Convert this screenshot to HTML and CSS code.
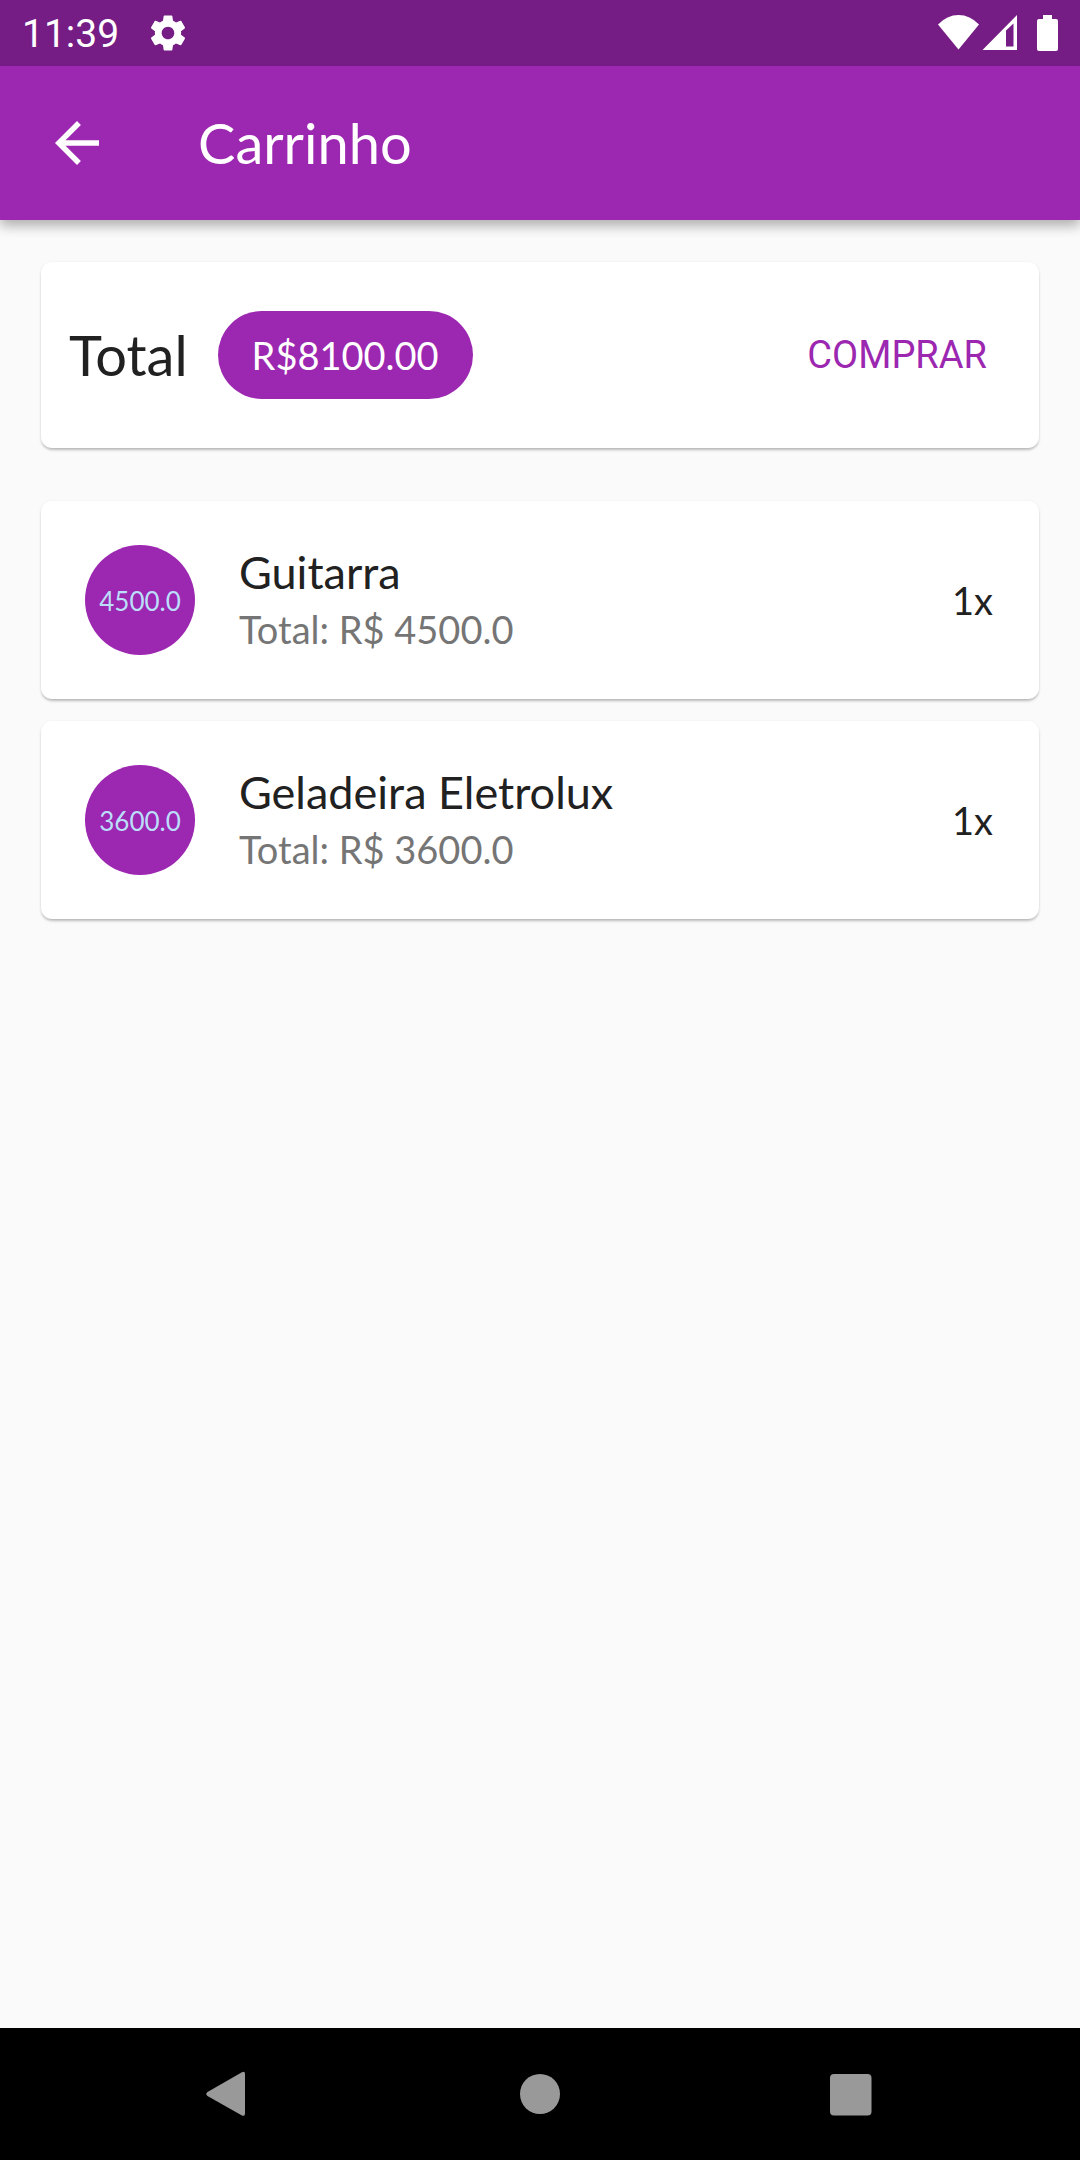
FILE: index.html
```html
<!DOCTYPE html>
<html lang="pt-BR">
<head>
<meta charset="utf-8">
<meta name="viewport" content="width=device-width, initial-scale=1">
<title>Carrinho</title>
<link rel="stylesheet" href="styles.css">
</head>
<body>
<div class="status-bar">
  <span class="clock">11:39</span>
  <svg class="gear" viewBox="0 0 24 24" width="42" height="42" aria-hidden="true"><path d="M19.43 12.98c.04-.32.07-.64.07-.98s-.03-.66-.07-.98l2.11-1.65c.19-.15.24-.42.12-.64l-2-3.46c-.12-.22-.39-.3-.61-.22l-2.49 1c-.52-.4-1.08-.73-1.69-.98l-.38-2.65C14.46 2.18 14.25 2 14 2h-4c-.25 0-.46.18-.49.42l-.38 2.65c-.61.25-1.17.59-1.69.98l-2.49-1c-.23-.09-.49 0-.61.22l-2 3.46c-.13.22-.07.49.12.64l2.11 1.65c-.04.32-.07.65-.07.98s.03.66.07.98l-2.11 1.65c-.19.15-.24.42-.12.64l2 3.46c.12.22.39.3.61.22l2.49-1c.52.4 1.08.73 1.69.98l.38 2.65c.03.24.24.42.49.42h4c.25 0 .46-.18.49-.42l.38-2.65c.61-.25 1.17-.59 1.69-.98l2.49 1c.23.09.49 0 .61-.22l2-3.46c.12-.22.07-.49-.12-.64l-2.11-1.65zM12 15.6c-1.98 0-3.6-1.62-3.6-3.6s1.62-3.6 3.6-3.6 3.6 1.62 3.6 3.6-1.62 3.6-3.6 3.6z"/></svg>
  <svg class="signals" viewBox="0 0 122 36" width="122" height="36" aria-hidden="true">
    <path d="M0 9.500Q9 0 20.500 0T41 9.500L20.500 34.500z"/>
    <path fill-rule="evenodd" d="M44.500 35L79 0V35zM68 15.500V31.500H75.500V8.500z"/>
    <path d="M105 0h9v4h4a2 2 0 0 1 2 2v28a2 2 0 0 1-2 2h-17a2 2 0 0 1-2-2V6a2 2 0 0 1 2-2h4z"/>
  </svg>
</div>
<header class="app-bar">
  <button class="back" type="button" aria-label="Voltar">
    <svg viewBox="0 0 24 24" width="66" height="66" aria-hidden="true"><path d="M20 11H7.830l5.590-5.590L12 4l-8 8 8 8 1.410-1.410L7.830 13H20v-2z"/></svg>
  </button>
  <h1 class="title">Carrinho</h1>
</header>
<main class="content">
  <section class="card summary">
    <h2 class="summary-label">Total</h2>
    <span class="chip">R$8100.00</span>
    <button class="buy" type="button">COMPRAR</button>
  </section>
  <ul class="items">
    <li class="card item">
      <span class="price">4500.0</span>
      <div class="info">
        <h3 class="name">Guitarra</h3>
        <p class="subtotal">Total: R$ 4500.0</p>
      </div>
      <span class="quantity">1x</span>
    </li>
    <li class="card item">
      <span class="price">3600.0</span>
      <div class="info">
        <h3 class="name">Geladeira Eletrolux</h3>
        <p class="subtotal">Total: R$ 3600.0</p>
      </div>
      <span class="quantity">1x</span>
    </li>
  </ul>
</main>
<nav class="nav-bar" aria-label="Sistema">
  <button class="nav-button" type="button" aria-label="Voltar">
    <svg viewBox="0 0 48 48" width="48" height="48" aria-hidden="true"><path d="M35.500 2.400Q39 .600 39 4V43.500Q39 47 35.500 45.200L1.500 26Q-1 24 1.500 22z"/></svg>
  </button>
  <button class="nav-button" type="button" aria-label="Início">
    <svg viewBox="0 0 48 48" width="48" height="48" aria-hidden="true"><circle cx="24" cy="24" r="20"/></svg>
  </button>
  <button class="nav-button" type="button" aria-label="Recentes">
    <svg viewBox="0 0 48 48" width="48" height="48" aria-hidden="true"><rect x="4" y="4" width="41.500" height="41.500" rx="4"/></svg>
  </button>
</nav>
</body>
</html>
```
FILE: styles.css
```css
* {
  box-sizing: border-box;
}

body {
  display: flex;
  flex-direction: column;
  min-height: 100vh;
  margin: 0;
  background: #fafafa;
  color: #212121;
  font-family: Lato, "Liberation Sans", sans-serif;
  font-size: 38px;
  line-height: 48px;
}

h1,
h2,
h3,
p,
ul {
  margin: 0;
  padding: 0;
  font-weight: 400;
}

button {
  border: 0;
  padding: 0;
  background: none;
  font: inherit;
  cursor: pointer;
}

svg {
  display: block;
  fill: currentColor;
}

.status-bar {
  position: relative;
  z-index: 1;
  display: flex;
  align-items: center;
  height: 66px;
  padding: 0 20px 0 22px;
  background: #751d84;
  color: #fff;
  font-family: Roboto, sans-serif;
}

.clock {
  padding-top: 2px;
  font-size: 39px;
}

.gear {
  margin-left: 28px;
}

.signals {
  margin-left: auto;
}

.app-bar {
  display: flex;
  align-items: center;
  height: 154px;
  padding: 0 44px;
  background: #9c27b0;
  color: #fff;
  box-shadow: 0 6px 11px rgba(0, 0, 0, 0.2), 0 4px 14px rgba(0, 0, 0, 0.14);
}

.back {
  color: inherit;
}

.title {
  margin-left: 88px;
  font-size: 56px;
  line-height: 66px;
}

.content {
  flex: 1;
  padding: 42px 41px;
}

.card {
  display: flex;
  align-items: center;
  border-radius: 11px;
  background: #fff;
  box-shadow: 0 3px 3px -1px rgba(0, 0, 0, 0.2), 0 1px 3px rgba(0, 0, 0, 0.12);
}

.summary {
  min-height: 186px;
  padding: 0 30px 0 28px;
}

.summary-label {
  font-size: 56px;
  line-height: 66px;
}

.chip {
  margin-left: 30px;
  padding: 20px 34px;
  border-radius: 44px;
  background: #9c27b0;
  color: #fff;
}

.buy {
  margin-left: auto;
  padding: 20px 22px;
  color: #9c27b0;
  font-family: Roboto, sans-serif;
}

.items {
  display: grid;
  gap: 22px;
  margin-top: 53px;
  list-style: none;
}

.item {
  min-height: 198px;
  padding: 0 46px 0 44px;
}

.price {
  display: flex;
  align-items: center;
  justify-content: center;
  width: 110px;
  height: 110px;
  padding-top: 2px;
  border-radius: 50%;
  background: #9c27b0;
  color: #bbdefb;
  font-size: 26px;
}

.info {
  flex: 1;
  margin-left: 44px;
  padding-top: 2px;
}

.name {
  font-size: 45px;
  line-height: 56px;
}

.subtotal {
  color: #757575;
  line-height: 58px;
}

.nav-bar {
  display: grid;
  grid-template-columns: repeat(3, 1fr);
  height: 132px;
  padding: 0 75px;
  background: #000;
}

.nav-button {
  display: flex;
  align-items: center;
  justify-content: center;
  color: #999;
}
```
